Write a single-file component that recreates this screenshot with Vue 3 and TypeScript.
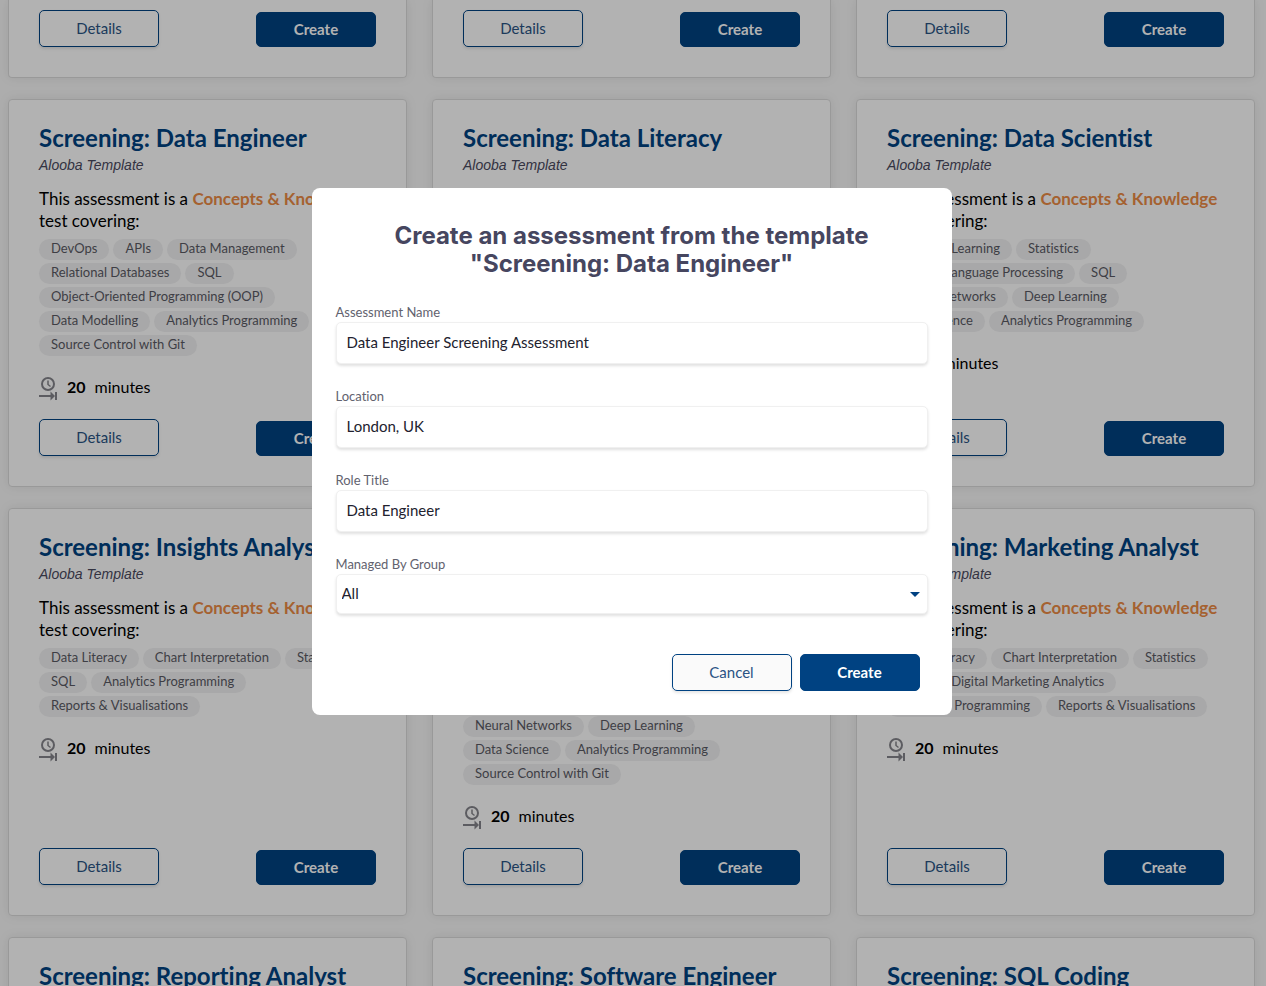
<script setup lang="ts">
import { ref } from 'vue'

interface Template {
  name: string
  kind: string
  rest: string
  topics: string[]
  minutes: number
  actionsOnly?: boolean
}

const concepts = 'Concepts & Knowledge'

function tpl(name: string, topics: string[], rest = 'test covering:', actionsOnly = false): Template {
  return { name, kind: concepts, rest, topics, minutes: 20, actionsOnly }
}

const templates: Template[] = [
  tpl('', [], '', true),
  tpl('', [], '', true),
  tpl('', [], '', true),
  tpl('Data Engineer', [
    'DevOps', 'APIs', 'Data Management', 'Relational Databases', 'SQL',
    'Object-Oriented Programming (OOP)', 'Data Modelling', 'Analytics Programming',
    'Source Control with Git',
  ]),
  tpl('Data Literacy', []),
  tpl('Data Scientist', [
    'Machine Learning', 'Statistics', 'Natural Language Processing', 'SQL',
    'Neural Networks', 'Deep Learning', 'Data Science', 'Analytics Programming',
  ]),
  tpl('Insights Analyst', [
    'Data Literacy', 'Chart Interpretation', 'Statistics', 'SQL',
    'Analytics Programming', 'Reports & Visualisations',
  ]),
  tpl('Machine Learning', [
    'Machine Learning', 'Natural Language Processing', 'Neural Networks', 'Deep Learning',
    'Data Science', 'Analytics Programming', 'Source Control with Git',
  ], 'test together with a short programming exercise and a set of machine learning questions, covering:'),
  tpl('Marketing Analyst', [
    'Data Literacy', 'Chart Interpretation', 'Statistics', 'SQL',
    'Digital Marketing Analytics', 'Analytics Programming', 'Reports & Visualisations',
  ]),
  tpl('Reporting Analyst', []),
  tpl('Software Engineer', []),
  tpl('SQL Coding', []),
]

const assessmentName = ref('Data Engineer Screening Assessment')
const location = ref('London, UK')
const roleTitle = ref('Data Engineer')
const group = ref('All')
</script>

<template>
  <div class="page">
    <main class="grid">
      <article
        v-for="(t, i) in templates"
        :key="i"
        class="card"
        :class="{ 'card-tail': t.actionsOnly }"
      >
        <template v-if="!t.actionsOnly">
          <h2 class="card-title">Screening: {{ t.name }}</h2>
          <p class="author">Alooba Template</p>
          <template v-if="t.topics.length">
            <p class="desc">This assessment is a <strong>{{ t.kind }}</strong> {{ t.rest }}</p>
            <ul class="topics">
              <li v-for="topic in t.topics" :key="topic">{{ topic }}</li>
            </ul>
            <div class="time">
              <svg width="18" height="25" viewBox="0 0 18 25" fill="none" stroke="#85858b" aria-hidden="true">
                <circle cx="9" cy="8" r="6" stroke-width="2" />
                <path d="M9 4.5V8.5L11.5 10.5" stroke-width="1.5" />
                <path d="M0 20H13" stroke-width="2" />
                <path d="M11.5 15.5L16 20L11.5 24.5Z" fill="#85858b" stroke="none" />
                <path d="M17 16V24" stroke-width="2" />
              </svg>
              <b>{{ t.minutes }}</b><span>minutes</span>
            </div>
          </template>
        </template>
        <div v-if="t.actionsOnly || t.topics.length" class="actions">
          <button type="button" class="btn outline">Details</button>
          <button type="button" class="btn solid">Create</button>
        </div>
      </article>
    </main>

    <div class="overlay">
      <form class="modal" role="dialog" aria-modal="true" aria-labelledby="modal-title" @submit.prevent>
        <h1 id="modal-title">Create an assessment from the template<br />"Screening: Data Engineer"</h1>
        <div class="field">
          <label for="name">Assessment Name</label>
          <input id="name" v-model="assessmentName" type="text" />
        </div>
        <div class="field">
          <label for="location">Location</label>
          <input id="location" v-model="location" type="text" />
        </div>
        <div class="field">
          <label for="role">Role Title</label>
          <input id="role" v-model="roleTitle" type="text" />
        </div>
        <div class="field">
          <label for="group">Managed By Group</label>
          <div class="select">
            <select id="group" v-model="group">
              <option>All</option>
            </select>
            <svg class="caret" width="10" height="5" viewBox="0 0 10 5" aria-hidden="true">
              <path d="M0 0H10L5 5Z" fill="#004282" />
            </svg>
          </div>
        </div>
        <div class="modal-actions">
          <button type="button" class="btn outline">Cancel</button>
          <button type="submit" class="btn solid">Create</button>
        </div>
      </form>
    </div>
  </div>
</template>

<style>
body {
  margin: 0;
}
</style>

<style scoped>
.page {
  position: relative;
  height: 100vh;
  overflow: hidden;
  background: #f8f8f8;
  font-family: Lato, "Open Sans", sans-serif;
  font-variant-ligatures: none;
  color: #000;
}

.page * {
  box-sizing: border-box;
}

.grid {
  display: grid;
  grid-template-columns: repeat(3, minmax(0, 1fr));
  column-gap: 25px;
  row-gap: 21px;
  padding: 0 11px 0 8px;
}

.card {
  display: flex;
  flex-direction: column;
  min-height: 388px;
  padding: 23px 30px 30px;
  background: #fff;
  border: 1px solid #dcdcdc;
  border-radius: 4px;
  box-shadow: 0 0 12px rgba(0, 0, 0, 0.08);
}

.card-tail {
  min-height: 0;
  padding-top: 10px;
  border-top: 0;
  border-radius: 0 0 4px 4px;
}

.card-title {
  margin: 0;
  font-size: 24px;
  line-height: 30px;
  font-weight: 700;
  color: #004282;
  white-space: nowrap;
}

.author {
  margin: 2px 0 0;
  font-family: "Liberation Sans", Arial, sans-serif;
  font-size: 14px;
  line-height: 20px;
  font-style: italic;
  color: #4a4a5e;
}

.desc {
  margin: 13px 0 0;
  font-size: 17px;
  line-height: 22px;
}

.desc strong {
  color: #ec8c46;
}

.topics {
  display: flex;
  flex-wrap: wrap;
  row-gap: 3px;
  margin: 7px 0 0;
  padding: 0;
  list-style: none;
}

.topics li {
  margin-right: 4px;
  padding: 0 12px 2px;
  border-radius: 11px;
  background: #f1f1f2;
  font-size: 13px;
  line-height: 19px;
  color: #5a5a64;
}

.time {
  display: flex;
  align-items: center;
  margin-top: 20px;
  height: 25px;
  font-size: 16px;
  line-height: 21px;
}

.time b,
.time span {
  padding-bottom: 4px;
}

.time b {
  margin: 0 9px 0 10px;
}

.actions {
  display: flex;
  align-items: flex-end;
  justify-content: space-between;
  margin-top: auto;
}

.time + .actions {
  padding-top: 18px;
}

.btn {
  width: 120px;
  height: 37px;
  padding: 0 0 2px;
  border: 1px solid #004282;
  border-radius: 5px;
  font-family: inherit;
  font-size: 15px;
  line-height: 20px;
}

.outline {
  background: transparent;
  color: #2a5384;
  box-shadow: 0 2px 3px rgba(0, 0, 0, 0.1);
}

.solid {
  background: #004282;
  color: #fff;
  font-weight: 700;
}

.actions .solid {
  height: 35px;
}

.overlay {
  position: absolute;
  inset: 0;
  display: flex;
  align-items: flex-start;
  justify-content: center;
  padding: 188px 3px 0 0;
  background: rgba(0, 0, 0, 0.3);
}

.modal {
  width: 640px;
  max-width: 100%;
  padding: 34px 24px 24px;
  border-radius: 8px;
  background: #fff;
}

.modal h1 {
  margin: 0 0 25px;
  font-family: Inter, sans-serif;
  font-size: 24px;
  line-height: 28px;
  font-weight: 700;
  text-align: center;
  color: #46465f;
}

.field {
  margin-bottom: 23px;
}

.field label {
  display: block;
  padding-bottom: 1px;
  font-size: 13px;
  line-height: 18px;
  color: #62626e;
}

.field input,
.field select {
  display: block;
  width: 100%;
  height: 42px;
  padding: 0 10px 2px;
  border: 1px solid #f0f0f0;
  border-radius: 5px;
  background: #fff;
  box-shadow: 0 2px 3px rgba(0, 0, 0, 0.12);
  font-family: inherit;
  font-size: 15px;
  color: #22222e;
}

.field select {
  height: 40px;
  padding: 0 24px 2px 5px;
  appearance: none;
}

.select {
  position: relative;
}

.caret {
  position: absolute;
  right: 8px;
  top: 18px;
}

.modal-actions {
  display: flex;
  justify-content: flex-end;
  gap: 8px;
  padding: 17px 8px 0 0;
}

.modal-actions .outline {
  background: #fafafa;
}
</style>
